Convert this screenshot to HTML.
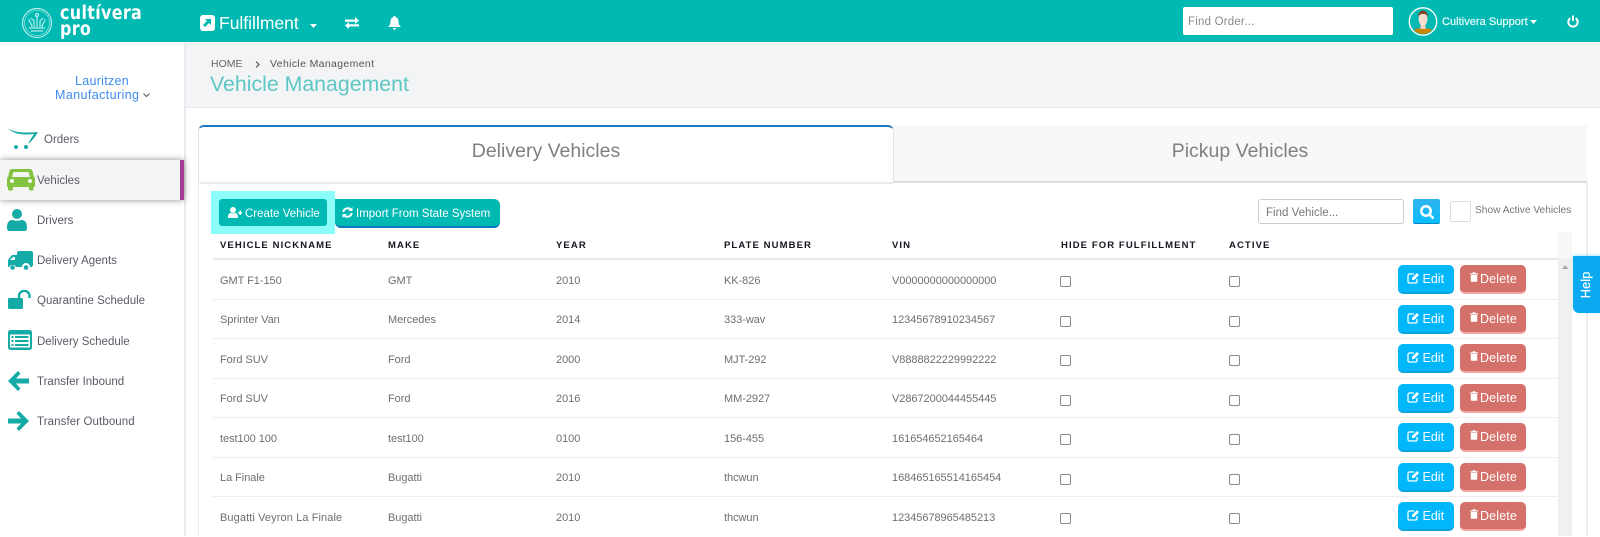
<!DOCTYPE html>
<html><head><meta charset="utf-8"><style>
*{box-sizing:border-box}
html,body{margin:0;padding:0;width:1600px;height:536px;overflow:hidden;background:#fff;font-family:"Liberation Sans",sans-serif;color:#666}
div,span,svg,b{position:absolute;white-space:nowrap}
.nav{left:37px;font-size:11.5px;color:#5a5a66;line-height:14px}
.th{top:240px;font-size:9.5px;font-weight:bold;letter-spacing:1.1px;color:#15151f;line-height:12px}
.row{left:211px;width:1347px;height:39.5px}
.row::after{content:"";position:absolute;left:2px;right:0;bottom:0;height:1px;background:#eee}
.row.l::after{display:none}
.c{top:13.7px;font-size:11px;color:#6f6f6f;line-height:14px;letter-spacing:-.05px}
.cb{top:16px;width:11px;height:11px;border:1px solid #8a8a8a;border-radius:2px;background:#fff}
.ed{left:1187px;top:5px;width:56px;height:29px;background:#00b7fb;border-bottom:2px solid #0aa3dc;border-radius:5px;color:#fff;font-size:12.5px;line-height:28.5px;padding-left:24.5px}
.de{left:1249px;top:5px;width:66px;height:29px;background:#d4716a;border-bottom:2px solid #f3a6a2;border-radius:5px;color:#fff;font-size:12.5px;line-height:28.5px;padding-left:20px;letter-spacing:.15px}
.ed svg{left:9px;top:7px}.de svg{left:9.5px;top:7px}
</style></head><body>
<!-- header -->
<div style="left:0;top:0;width:1600px;height:42px;background:#00b9b3"></div>
<svg style="left:21px;top:7px" width="32" height="32" viewBox="0 0 32 32" fill="none" stroke="#b5ecea" stroke-width="1.2"><circle cx="16" cy="16" r="14.5"/><circle cx="16" cy="16" r="12.5" stroke-width=".6"/><path d="M8 21h16M10 24h12M16 20V9M11 20c0-4-3-4-3-8M21 20c0-4 3-4 3-8M13 20v-6l-3-3M19 20v-6l3-3"/><circle cx="16" cy="8" r="1.5"/></svg>
<div style="left:60px;top:6px;font-size:18.5px;font-weight:bold;color:#fff;line-height:15.5px;letter-spacing:.4px;font-family:'DejaVu Sans',sans-serif;transform-origin:0 0;transform:scaleX(.86)">cultívera<br>pro</div>
<svg style="left:200px;top:15px" width="15" height="16" viewBox="0 0 15 16"><rect width="15" height="16" rx="3" fill="#fff"/><path d="M5 4h6v6l-2-2-4 4-2-2 4-4z" fill="#00b9b3"/></svg>
<div style="left:219px;top:13px;font-size:17.5px;color:#fff;line-height:20px">Fulfillment</div>
<svg style="left:310px;top:24px" width="8" height="4"><path d="M0 0h7L3.500 4z" fill="#fff"/></svg>
<svg style="left:345px;top:17px" width="14" height="12" viewBox="0 0 14 12" fill="#fff"><path d="M0 2.500h10V0l4 3.500L10 7V4.800H0zM14 7.200H4V5L0 8.500 4 12V9.500h10z"/></svg>
<svg style="left:388px;top:16px" width="13" height="14" viewBox="0 0 13 14" fill="#fff"><path d="M6.500 0c1 0 1.300.6 1.300 1.200 2 .5 2.700 2.200 2.700 4.300 0 2.500.7 3.700 2.500 5.500H0c1.800-1.800 2.500-3 2.500-5.500 0-2.100.7-3.800 2.700-4.300C5.200.6 5.500 0 6.500 0zM5 12h3c0 1-.7 1.800-1.500 1.800S5 13 5 12z"/></svg>
<div style="left:1183px;top:7px;width:210px;height:28px;background:#fff;border-radius:2px;font-size:11.5px;line-height:30px;color:#8a8a8a;padding-left:5px;letter-spacing:.2px">Find Order...</div>
<svg style="left:1408px;top:6px" width="30" height="31" viewBox="0 0 30 31"><clipPath id="k"><circle cx="15" cy="15.500" r="12.500"/></clipPath><g clip-path="url(#k)"><path d="M3 28c1-4.500 6-6 12-6s11 1.500 12 6v3H3z" fill="#c98500"/><rect x="12.500" y="16" width="5" height="7" fill="#f5d5c0"/><ellipse cx="15" cy="13" rx="4.500" ry="6.500" fill="#f8dfcf"/><path d="M10.300 12c-.6-5 1.700-7.500 4.700-7.500s5.300 2.500 4.700 7.500c-.6-3-1.700-4-4.700-4s-4.100 1-4.700 4z" fill="#7b4a2e"/></g><circle cx="15" cy="15.500" r="13.700" fill="none" stroke="#fff" stroke-width="1.400"/></svg>
<div style="left:1442px;top:15px;font-size:11.1px;color:#e9fbfa;line-height:14px;-webkit-text-stroke:.2px #e9fbfa">Cultivera Support</div>
<svg style="left:1530px;top:20px" width="7" height="4"><path d="M0 0h7L3.500 4z" fill="#fff"/></svg>
<svg style="left:1567px;top:15px" width="12" height="13" viewBox="0 0 12 13" fill="none" stroke="#fff" stroke-width="2"><path d="M3.200 3.200a4.700 4.700 0 1 0 5.600 0M6 .5v5.500"/></svg>
<!-- sidebar -->
<div style="left:184px;top:42px;width:2px;height:494px;background:#e9ebf0"></div>
<div style="left:102px;top:74px;font-size:12.5px;color:#3e8df0;line-height:14px;transform:translateX(-50%);text-align:center;width:120px;letter-spacing:.3px">Lauritzen</div>
<div style="left:55px;top:88px;font-size:12.5px;color:#3e8df0;line-height:14px;letter-spacing:.4px">Manufacturing</div>
<svg style="left:143px;top:93px" width="7" height="5" fill="none" stroke="#555"><path d="M.5.500l3 3 3-3"/></svg>
<svg style="left:7px;top:127px" width="32" height="24" viewBox="0 0 32 24"><path d="M1 1c6 5 17 5 30 4-3 5-6 9-10 12 2-4 4-7 6-10C17 8 7 8 1 1z" fill="#15aaa5"/><circle cx="9" cy="20" r="2" fill="#15aaa5"/><circle cx="19" cy="20" r="2" fill="#15aaa5"/></svg>
<div class="nav" style="left:44px;top:133px">Orders</div>
<div style="left:0;top:160px;width:184px;height:40px;background:#f4f4f4;box-shadow:0 0 6px rgba(0,0,0,.45)"></div>
<div style="left:180px;top:160px;width:4px;height:40px;background:#a83d97"></div>
<svg style="left:7px;top:169px" width="28" height="22" viewBox="0 0 28 22"><path d="M5 0h18c2 0 3 2 3.500 7 1 .5 1.500 2 1.500 4v6c0 1-1 1-1.500 1v2.500c0 1.500-4.500 1.500-4.500 0V18H6v2.500c0 1.500-5 1.500-5 0V18c-.6 0-1 0-1-1v-6c0-2 .5-3.500 1.500-4C2 2 3 0 5 0z" fill="#84c33f"/><path d="M6.500 3h15l1.500 5H5z" fill="#f4f4f4"/><circle cx="5" cy="12" r="2" fill="#f4f4f4"/><circle cx="23" cy="12" r="2" fill="#f4f4f4"/></svg>
<div class="nav" style="top:173.5px">Vehicles</div>
<svg style="left:7px;top:209px" width="20" height="22" viewBox="0 0 20 22" fill="#14aaa5"><circle cx="10" cy="5" r="5"/><path d="M0 19c0-7 3-8 6-8 2 1 6 1 8 0 3 0 6 1 6 8 0 2-1 3-3 3H3c-2 0-3-1-3-3z"/></svg>
<div class="nav" style="top:214px">Drivers</div>
<svg style="left:8px;top:251px" width="25" height="20" viewBox="0 0 25 20" fill="#14aaa5"><path d="M9 2c0-1 1-2 2-2h12c1 0 2 1 2 2v12c0 1-1 2-2 2h-1a4 4 0 0 0-8 0H8a4 4 0 0 0-7 0H0V9l4-5h5z"/><circle cx="4.500" cy="16.500" r="2.300"/><circle cx="18" cy="16.500" r="2.300"/><path d="M2 9l3-3h2v3z" fill="#fff"/></svg>
<div class="nav" style="top:254px">Delivery Agents</div>
<svg style="left:8px;top:290px" width="23" height="20" viewBox="0 0 23 20" fill="#14aaa5"><rect y="8" width="15" height="11" rx="1.500"/><path d="M11 9V6a5 5 0 0 1 10.500 0v2" fill="none" stroke="#14aaa5" stroke-width="2.400"/></svg>
<div class="nav" style="top:294px">Quarantine Schedule</div>
<svg style="left:8px;top:330px" width="24" height="20" viewBox="0 0 24 20"><rect width="24" height="20" rx="2.500" fill="#14aaa5"/><rect x="2" y="4.500" width="20" height="13" fill="#fff"/><path d="M3.500 6h2v2h-2zM3.500 10h2v2h-2zM3.500 14h2v2h-2zM7 6h13.500v2H7zM7 10h13.500v2H7zM7 14h13.500v2H7z" fill="#14aaa5"/></svg>
<div class="nav" style="top:335px">Delivery Schedule</div>
<svg style="left:8px;top:371px" width="21" height="20" viewBox="0 0 21 20" fill="#14aaa5"><path d="M10 0l2.500 2.500L8 7.500h13v5H8l4.500 5L10 20 0 10z"/></svg>
<div class="nav" style="top:375px">Transfer Inbound</div>
<svg style="left:8px;top:411px" width="21" height="20" viewBox="0 0 21 20" fill="#14aaa5"><path d="M11 0L8.500 2.500l4.500 5H0v5h13l-4.500 5L11 20l10-10z"/></svg>
<div class="nav" style="top:415px;letter-spacing:.1px">Transfer Outbound</div>
<!-- page head -->
<div style="left:186px;top:42px;width:1414px;height:66px;background:#f3f4f6;border-bottom:1px solid #e7e9ee"></div>
<div style="left:211px;top:58px;font-size:10.5px;color:#666;line-height:13px">HOME</div>
<svg style="left:255px;top:61px" width="5" height="7" fill="none" stroke="#555" stroke-width="1.200"><path d="M1 .5l3 3-3 3"/></svg>
<div style="left:270px;top:58px;font-size:10.5px;color:#555;line-height:13px;letter-spacing:.35px">Vehicle Management</div>
<div style="left:210px;top:71px;font-size:21.3px;color:#5cc7c3;line-height:26px">Vehicle Management</div>
<!-- tabs -->
<div style="left:893px;top:125px;width:694px;height:57px;background:#f8f8f8;border-bottom:1px solid #ddd"></div>
<div style="left:198px;top:125px;width:696px;height:57px;background:#fff;border:1px solid #e3e3e3;border-top:2px solid #1f78bf;border-bottom:none;border-radius:6px 6px 0 0"></div>
<div style="left:198px;top:182px;width:695px;height:2px;background:#ebebeb"></div>
<div style="left:893px;top:182px;width:694px;height:1px;background:#ddd"></div>
<div style="left:1586px;top:183px;width:2px;height:353px;background:#ececec"></div>
<div style="left:198px;top:183px;width:1px;height:353px;background:#ebebeb"></div>
<div style="left:546px;top:139px;font-size:19.5px;color:#808080;line-height:24px;transform:translateX(-50%)">Delivery Vehicles</div>
<div style="left:1240px;top:139px;font-size:19.5px;color:#808080;line-height:24px;transform:translateX(-50%)">Pickup Vehicles</div>
<!-- toolbar -->
<div style="left:211px;top:191px;width:124px;height:43px;background:#8bfefa"></div>
<div style="left:219px;top:199px;width:108px;height:27px;background:#00b9b3;border-radius:3px;color:#fff;font-size:11.5px;line-height:30px;padding-left:26px">Create Vehicle</div>
<svg style="left:228px;top:207px" width="14" height="11" viewBox="0 0 14 11" fill="#fff"><circle cx="5" cy="3" r="3"/><path d="M0 11c0-4 1-5 3-5 1 .6 3 .6 4 0 1.500 0 3 1 3 5zM10 5h1.500V3.500H13V5h1v1.500h-1V8h-1.500V6.500H10z"/></svg>
<div style="left:335px;top:199px;width:165px;height:29px;background:#00b9b3;border-bottom:2px solid #0a79bd;border-radius:0 6px 6px 6px;color:#fff;font-size:11.5px;line-height:30px;padding-left:21px">Import From State System</div>
<svg style="left:342px;top:207px" width="11" height="11" viewBox="0 0 11 11" fill="none" stroke="#fff" stroke-width="2"><path d="M1.300 5a4.300 4.300 0 0 1 7.700-2M9.700 6A4.300 4.300 0 0 1 2 8"/><path d="M10.500 0v4h-4zM.5 11V7h4z" fill="#fff" stroke="none"/></svg>
<div style="left:1258px;top:199px;width:146px;height:25px;border:1px solid #ccc;border-radius:3px;background:#fff;font-size:11.5px;line-height:27px;color:#777;padding-left:7px">Find Vehicle...</div>
<div style="left:1413px;top:199px;width:27px;height:25px;background:linear-gradient(#2fb4ee,#0abcfd);border-bottom:1px solid #0a86c0;border-radius:2px"></div>
<svg style="left:1419px;top:204px" width="16" height="16" viewBox="0 0 16 16" fill="none" stroke="#fff" stroke-width="2.500"><circle cx="7" cy="7" r="4.700"/><path d="M10.500 10.500l4 4"/></svg>
<div style="left:1450px;top:201px;width:21px;height:21px;border:1px solid #ddd;border-radius:2px;background:#fff"></div>
<div style="left:1475px;top:204px;font-size:10.2px;color:#777;line-height:13px">Show Active Vehicles</div>
<!-- table head -->
<div class="th" style="left:220px">VEHICLE NICKNAME</div>
<div class="th" style="left:388px">MAKE</div>
<div class="th" style="left:556px">YEAR</div>
<div class="th" style="left:724px">PLATE NUMBER</div>
<div class="th" style="left:892px">VIN</div>
<div class="th" style="left:1061px">HIDE FOR FULFILLMENT</div>
<div class="th" style="left:1229px">ACTIVE</div>
<div style="left:213px;top:258px;width:1345px;height:2px;background:#e9e9e9"></div>
<div style="left:1558px;top:232px;width:14px;height:26px;background:#f8f8f8"></div>
<div style="left:1558px;top:258px;width:14px;height:278px;background:#f0f0f0"></div>
<svg style="left:1562px;top:265px" width="7" height="4"><path d="M0 4h6.500L3.200 0z" fill="#a8a8a8"/></svg>
<!-- rows -->
<div class="row" style="top:260px"><span class="c" style="left:9px">GMT F1-150</span><span class="c" style="left:177px">GMT</span><span class="c" style="left:345px">2010</span><span class="c" style="left:513px">KK-826</span><span class="c" style="left:681px">V0000000000000000</span><span class="cb" style="left:849px"></span><span class="cb" style="left:1018px"></span><div class="ed"><svg width="13" height="12" viewBox="0 0 13 12" fill="none" stroke="#fff" stroke-width="1.300"><path d="M10 7v2.500c0 1-.6 1.500-1.500 1.500h-6C1.600 11 1 10.500 1 9.500v-6C1 2.600 1.600 2 2.500 2H7"/><path d="M5 6l5-5 2 2-5 5H5z" fill="#fff" stroke="none"/></svg>Edit</div><div class="de"><svg width="8" height="10" viewBox="0 0 10 12" fill="#fff"><path d="M3 1.500C3 .5 3.500 0 4 0h2c.5 0 1 .5 1 1.500h3v1.300H0V1.500zM1 3.500h8V11c0 .6-.4 1-1 1H2c-.6 0-1-.4-1-1z"/></svg>Delete</div></div>
<div class="row" style="top:299.5px"><span class="c" style="left:9px">Sprinter Van</span><span class="c" style="left:177px">Mercedes</span><span class="c" style="left:345px">2014</span><span class="c" style="left:513px">333-wav</span><span class="c" style="left:681px">12345678910234567</span><span class="cb" style="left:849px"></span><span class="cb" style="left:1018px"></span><div class="ed"><svg width="13" height="12" viewBox="0 0 13 12" fill="none" stroke="#fff" stroke-width="1.300"><path d="M10 7v2.500c0 1-.6 1.500-1.500 1.500h-6C1.600 11 1 10.500 1 9.500v-6C1 2.600 1.600 2 2.500 2H7"/><path d="M5 6l5-5 2 2-5 5H5z" fill="#fff" stroke="none"/></svg>Edit</div><div class="de"><svg width="8" height="10" viewBox="0 0 10 12" fill="#fff"><path d="M3 1.500C3 .5 3.500 0 4 0h2c.5 0 1 .5 1 1.500h3v1.300H0V1.500zM1 3.500h8V11c0 .6-.4 1-1 1H2c-.6 0-1-.4-1-1z"/></svg>Delete</div></div>
<div class="row" style="top:339px"><span class="c" style="left:9px">Ford SUV</span><span class="c" style="left:177px">Ford</span><span class="c" style="left:345px">2000</span><span class="c" style="left:513px">MJT-292</span><span class="c" style="left:681px">V8888822229992222</span><span class="cb" style="left:849px"></span><span class="cb" style="left:1018px"></span><div class="ed"><svg width="13" height="12" viewBox="0 0 13 12" fill="none" stroke="#fff" stroke-width="1.300"><path d="M10 7v2.500c0 1-.6 1.500-1.500 1.500h-6C1.600 11 1 10.500 1 9.500v-6C1 2.600 1.600 2 2.500 2H7"/><path d="M5 6l5-5 2 2-5 5H5z" fill="#fff" stroke="none"/></svg>Edit</div><div class="de"><svg width="8" height="10" viewBox="0 0 10 12" fill="#fff"><path d="M3 1.500C3 .5 3.500 0 4 0h2c.5 0 1 .5 1 1.500h3v1.300H0V1.500zM1 3.500h8V11c0 .6-.4 1-1 1H2c-.6 0-1-.4-1-1z"/></svg>Delete</div></div>
<div class="row" style="top:378.5px"><span class="c" style="left:9px">Ford SUV</span><span class="c" style="left:177px">Ford</span><span class="c" style="left:345px">2016</span><span class="c" style="left:513px">MM-2927</span><span class="c" style="left:681px">V2867200044455445</span><span class="cb" style="left:849px"></span><span class="cb" style="left:1018px"></span><div class="ed"><svg width="13" height="12" viewBox="0 0 13 12" fill="none" stroke="#fff" stroke-width="1.300"><path d="M10 7v2.500c0 1-.6 1.500-1.500 1.500h-6C1.600 11 1 10.500 1 9.500v-6C1 2.600 1.600 2 2.500 2H7"/><path d="M5 6l5-5 2 2-5 5H5z" fill="#fff" stroke="none"/></svg>Edit</div><div class="de"><svg width="8" height="10" viewBox="0 0 10 12" fill="#fff"><path d="M3 1.500C3 .5 3.500 0 4 0h2c.5 0 1 .5 1 1.500h3v1.300H0V1.500zM1 3.500h8V11c0 .6-.4 1-1 1H2c-.6 0-1-.4-1-1z"/></svg>Delete</div></div>
<div class="row" style="top:418px"><span class="c" style="left:9px">test100 100</span><span class="c" style="left:177px">test100</span><span class="c" style="left:345px">0100</span><span class="c" style="left:513px">156-455</span><span class="c" style="left:681px">161654652165464</span><span class="cb" style="left:849px"></span><span class="cb" style="left:1018px"></span><div class="ed"><svg width="13" height="12" viewBox="0 0 13 12" fill="none" stroke="#fff" stroke-width="1.300"><path d="M10 7v2.500c0 1-.6 1.500-1.500 1.500h-6C1.600 11 1 10.500 1 9.500v-6C1 2.600 1.600 2 2.500 2H7"/><path d="M5 6l5-5 2 2-5 5H5z" fill="#fff" stroke="none"/></svg>Edit</div><div class="de"><svg width="8" height="10" viewBox="0 0 10 12" fill="#fff"><path d="M3 1.500C3 .5 3.500 0 4 0h2c.5 0 1 .5 1 1.500h3v1.300H0V1.500zM1 3.500h8V11c0 .6-.4 1-1 1H2c-.6 0-1-.4-1-1z"/></svg>Delete</div></div>
<div class="row" style="top:457.5px"><span class="c" style="left:9px">La Finale</span><span class="c" style="left:177px">Bugatti</span><span class="c" style="left:345px">2010</span><span class="c" style="left:513px">thcwun</span><span class="c" style="left:681px">168465165514165454</span><span class="cb" style="left:849px"></span><span class="cb" style="left:1018px"></span><div class="ed"><svg width="13" height="12" viewBox="0 0 13 12" fill="none" stroke="#fff" stroke-width="1.300"><path d="M10 7v2.500c0 1-.6 1.500-1.500 1.500h-6C1.600 11 1 10.500 1 9.500v-6C1 2.600 1.600 2 2.500 2H7"/><path d="M5 6l5-5 2 2-5 5H5z" fill="#fff" stroke="none"/></svg>Edit</div><div class="de"><svg width="8" height="10" viewBox="0 0 10 12" fill="#fff"><path d="M3 1.500C3 .5 3.500 0 4 0h2c.5 0 1 .5 1 1.500h3v1.300H0V1.500zM1 3.500h8V11c0 .6-.4 1-1 1H2c-.6 0-1-.4-1-1z"/></svg>Delete</div></div>
<div class="row l" style="top:497px"><span class="c" style="left:9px;letter-spacing:.1px">Bugatti Veyron La Finale</span><span class="c" style="left:177px">Bugatti</span><span class="c" style="left:345px">2010</span><span class="c" style="left:513px">thcwun</span><span class="c" style="left:681px">12345678965485213</span><span class="cb" style="left:849px"></span><span class="cb" style="left:1018px"></span><div class="ed"><svg width="13" height="12" viewBox="0 0 13 12" fill="none" stroke="#fff" stroke-width="1.300"><path d="M10 7v2.500c0 1-.6 1.500-1.500 1.500h-6C1.600 11 1 10.500 1 9.500v-6C1 2.600 1.600 2 2.500 2H7"/><path d="M5 6l5-5 2 2-5 5H5z" fill="#fff" stroke="none"/></svg>Edit</div><div class="de"><svg width="8" height="10" viewBox="0 0 10 12" fill="#fff"><path d="M3 1.500C3 .5 3.500 0 4 0h2c.5 0 1 .5 1 1.500h3v1.300H0V1.500zM1 3.500h8V11c0 .6-.4 1-1 1H2c-.6 0-1-.4-1-1z"/></svg>Delete</div></div>
<!-- help -->
<div style="left:1573px;top:256px;width:27px;height:57px;background:#0aa9f0;border-radius:0 0 0 6px;box-shadow:0 -1px 3px rgba(170,225,250,.8)"></div>
<div style="left:1586px;top:285px;font-size:13px;color:#fff;line-height:14px;transform:translate(-50%,-50%) rotate(-90deg);-webkit-text-stroke:.2px #fff">Help</div>
</body></html>
